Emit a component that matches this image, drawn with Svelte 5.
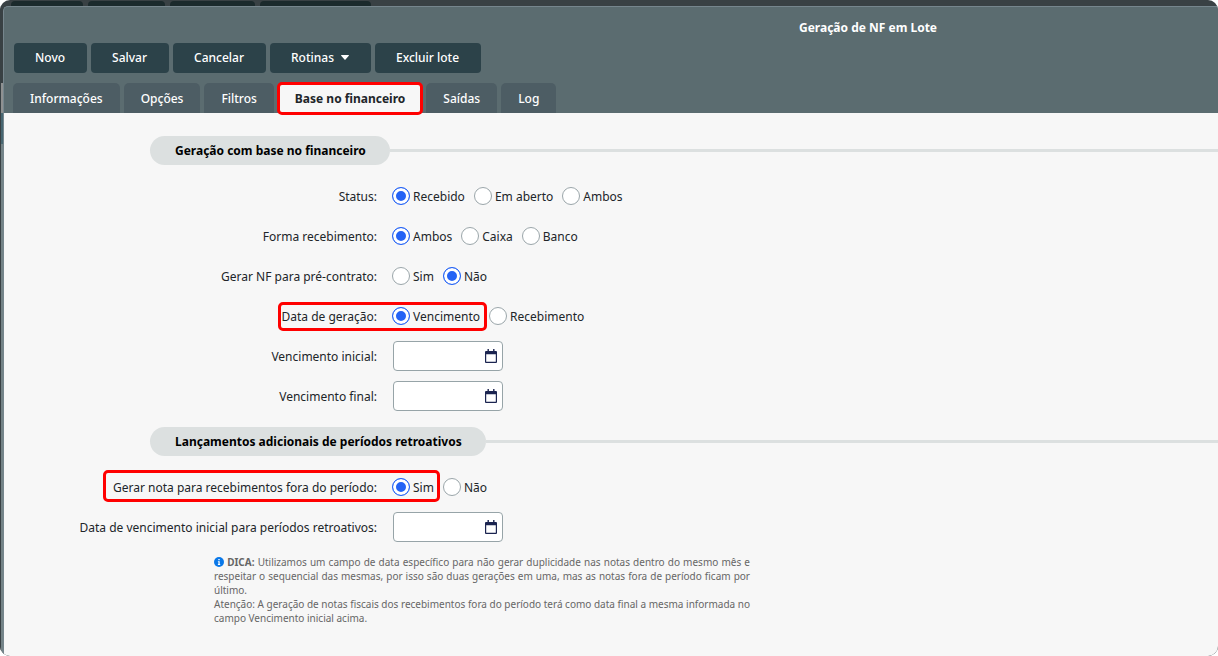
<script>
  const actions = ['Novo', 'Salvar', 'Cancelar', 'Rotinas', 'Excluir lote'];
  const tabs = ['Informações', 'Opções', 'Filtros', 'Base no financeiro', 'Saídas', 'Log'];
  let activeTab = $state('Base no financeiro');

  const sections = [
    {
      title: 'Geração com base no financeiro',
      fields: [
        { id: 'status', label: 'Status:', options: ['Recebido', 'Em aberto', 'Ambos'] },
        { id: 'forma', label: 'Forma recebimento:', options: ['Ambos', 'Caixa', 'Banco'] },
        { id: 'preContrato', label: 'Gerar NF para pré-contrato:', options: ['Sim', 'Não'] },
        { id: 'dataGeracao', label: 'Data de geração:', options: ['Vencimento', 'Recebimento'], mark: 'mark-data' },
        { id: 'vencInicial', label: 'Vencimento inicial:' },
        { id: 'vencFinal', label: 'Vencimento final:' }
      ]
    },
    {
      title: 'Lançamentos adicionais de períodos retroativos',
      fields: [
        { id: 'foraPeriodo', label: 'Gerar nota para recebimentos fora do período:', options: ['Sim', 'Não'], mark: 'mark-nota' },
        { id: 'vencRetroativo', label: 'Data de vencimento inicial para períodos retroativos:' }
      ]
    }
  ];

  let values = $state({
    status: 'Recebido',
    forma: 'Ambos',
    preContrato: 'Não',
    dataGeracao: 'Vencimento',
    vencInicial: '',
    vencFinal: '',
    foraPeriodo: 'Sim',
    vencRetroativo: ''
  });
</script>

<div class="desktop">
  <div class="back-tabs" aria-hidden="true">
    <span class="w1"></span><span class="w2"></span><span class="w3"></span><span class="w4"></span>
  </div>
  <div class="middle">
    <div class="edge" aria-hidden="true"></div>
    <div class="window">
      <header>
        <h1>Geração de NF em Lote</h1>
        <div class="toolbar">
          {#each actions as action}
            <button type="button">
              {action}
              {#if action === 'Rotinas'}
                <svg width="8" height="5" viewBox="0 0 8 5"><path d="M.5 0h7c.5 0 .6.5.3.8L4.5 4.6c-.3.4-.7.4-1 0L.2.8C-.1.5 0 0 .5 0z" fill="#fff" /></svg>
              {/if}
            </button>
          {/each}
        </div>
        <div class="tabs" role="tablist">
          {#each tabs as tab}
            <button
              type="button"
              role="tab"
              aria-selected={activeTab === tab}
              class:active={activeTab === tab}
              onclick={() => (activeTab = tab)}>{tab}</button>
          {/each}
        </div>
      </header>

      <main>
        {#each sections as section}
          <div class="section-title">
            <h2>{section.title}</h2>
            <div class="line"></div>
          </div>
          {#each section.fields as field}
            {#if field.options}
              <div class="field" role="radiogroup" aria-labelledby="{field.id}-label">
                <span class="label" id="{field.id}-label">{field.label}</span>
                <div class="options">
                  {#each field.options as option}
                    <label>
                      <input type="radio" name={field.id} value={option} bind:group={values[field.id]} />
                      <span>{option}</span>
                    </label>
                  {/each}
                </div>
                {#if field.mark}
                  <div class="mark {field.mark}"></div>
                {/if}
              </div>
            {:else}
              <div class="field">
                <label class="label" for={field.id}>{field.label}</label>
                <div class="date">
                  <input type="text" id={field.id} bind:value={values[field.id]} />
                  <button type="button" aria-label="Abrir calendário">
                    <svg width="12" height="14" viewBox="0 0 12 14">
                      <path d="M2.5 0h1.4v2h4.2V0h1.4v2H11a1 1 0 0 1 1 1v10a1 1 0 0 1-1 1H1a1 1 0 0 1-1-1V3a1 1 0 0 1 1-1h1.500zM1.200 5.200v7.600h9.600V5.200z" fill="#1b2450" fill-rule="evenodd" />
                    </svg>
                  </button>
                </div>
              </div>
            {/if}
          {/each}
        {/each}

        <p class="hint">
          <svg width="10" height="10" viewBox="0 0 10 10">
            <circle cx="5" cy="5" r="5" fill="#0a78e8" />
            <path d="M4.300 2h1.400v1.300H4.300zM3.900 4.200h1.800v2.900h.5v.9H3.900v-.9h.5v-2h-.5z" fill="#fff" />
          </svg>
          <b>DICA:</b> Utilizamos um campo de data específico para não gerar duplicidade nas notas dentro do mesmo mês e respeitar o sequencial das mesmas, por isso são duas gerações em uma, mas as notas fora de período ficam por último.<br />
          Atenção: A geração de notas fiscais dos recebimentos fora do período terá como data final a mesma informada no campo Vencimento inicial acima.
        </p>
      </main>
    </div>
  </div>
</div>

<style>
  :global(body) {
    margin: 0;
    background: #fff;
  }

  .desktop {
    display: flex;
    flex-direction: column;
    min-height: 100vh;
    background: #394144;
    border-radius: 10px;
    overflow: hidden;
    font-family: 'Noto Sans', sans-serif;
    font-size: 12px;
    color: #212529;
  }

  .back-tabs {
    display: flex;
    gap: 5px;
    padding: 1px 0 0 11px;
  }

  .back-tabs span {
    height: 5px;
    background: #1b2a2c;
    border-radius: 4px 4px 0 0;
  }

  .w1 { width: 72px; }
  .w2 { width: 77px; }
  .w3 { width: 85px; }
  .w4 { width: 111px; }

  .middle {
    flex: 1;
    display: flex;
  }

  .edge {
    width: 3px;
    box-sizing: border-box;
    border-left: 1px solid #394144;
    background: linear-gradient(#394144 77px, #8f9191 77px 107px, #476671 107px 138px, #748387 138px);
  }

  .window {
    flex: 1;
    display: flex;
    flex-direction: column;
    min-width: 0;
    border-top: 1px solid #76868d;
    border-left: 1px solid #76868d;
    border-top-left-radius: 5px;
    overflow: hidden;
    background: #5b6c70;
  }

  h1 {
    margin: 0;
    padding: 12px 0 6px 514px;
    font-size: 12px;
    line-height: 18px;
    font-weight: 700;
    color: #fff;
    text-align: center;
    white-space: nowrap;
  }

  .toolbar {
    display: flex;
    gap: 4px;
    padding: 0 10px;
  }

  button {
    font: inherit;
    border: 0;
    cursor: pointer;
  }

  .toolbar button {
    display: flex;
    align-items: center;
    gap: 7px;
    height: 30px;
    padding: 0 22px 2px 21px;
    border-radius: 4px;
    background: #2c4249;
    color: #fff;
    font-weight: 500;
  }

  .tabs {
    display: flex;
    gap: 4px;
    padding: 10px 9px 0;
  }

  .tabs button {
    height: 30px;
    padding: 0 17px;
    border-radius: 5px 5px 0 0;
    background: #4d5d64;
    color: #fff;
    font-weight: 500;
  }

  .tabs button.active {
    position: relative;
    background: #f7f7f7;
    color: #212529;
    font-weight: 700;
  }

  .tabs button.active::after {
    content: '';
    position: absolute;
    inset: -1px -1px -2px;
    border: 3px solid #ff0000;
    border-radius: 5px;
  }

  main {
    flex: 1;
    padding: 12px 0 20px;
    background: #f7f7f7;
  }

  .section-title {
    display: flex;
    align-items: center;
    margin: 11px 0 11px 146px;
  }

  h2 {
    margin: 0;
    padding: 0 24px 0 25px;
    border-radius: 15px;
    background: #dce0e0;
    color: #000;
    font-size: 12px;
    line-height: 29px;
    font-weight: 700;
  }

  .line {
    flex: 1;
    height: 3px;
    background: #dce0e0;
  }

  .field {
    position: relative;
    display: flex;
    align-items: center;
    gap: 15px;
    height: 40px;
  }

  .label {
    width: 373px;
    text-align: right;
  }

  .options {
    display: flex;
    gap: 9px;
  }

  .options label {
    display: flex;
    align-items: center;
    gap: 3px;
  }

  input[type='radio'] {
    appearance: none;
    width: 18px;
    height: 18px;
    margin: 0;
    border: 1px solid #9ba6aa;
    border-radius: 50%;
    background: #fff;
  }

  input[type='radio']:checked {
    border-color: #2463f5;
    background: #2463f5;
    box-shadow: inset 0 0 0 3px #fff;
  }

  .date {
    display: flex;
    align-items: center;
    box-sizing: border-box;
    width: 110px;
    height: 30px;
    margin-left: 1px;
    padding-right: 5px;
    border: 1px solid #97a4a8;
    border-radius: 4px;
    background: #fff;
  }

  .date input {
    flex: 1;
    min-width: 0;
    padding: 0 6px;
    border: 0;
    outline: 0;
    background: none;
    font: inherit;
  }

  .date button {
    display: flex;
    padding: 0;
    background: none;
  }

  /* red frames around the options being explained */
  .mark {
    position: absolute;
    box-sizing: border-box;
    border: 3px solid #ff0000;
    border-radius: 5px;
    pointer-events: none;
  }

  .mark-data {
    left: 274px;
    top: 6px;
    width: 209px;
    height: 29px;
  }

  .mark-nota {
    left: 99px;
    top: 3px;
    width: 337px;
    height: 32px;
  }

  .hint {
    max-width: 536px;
    margin: 8px 0 0 210px;
    font-size: 10px;
    line-height: 14px;
    color: #666;
    text-align: justify;
  }

  .hint svg {
    vertical-align: -1px;
  }
</style>
